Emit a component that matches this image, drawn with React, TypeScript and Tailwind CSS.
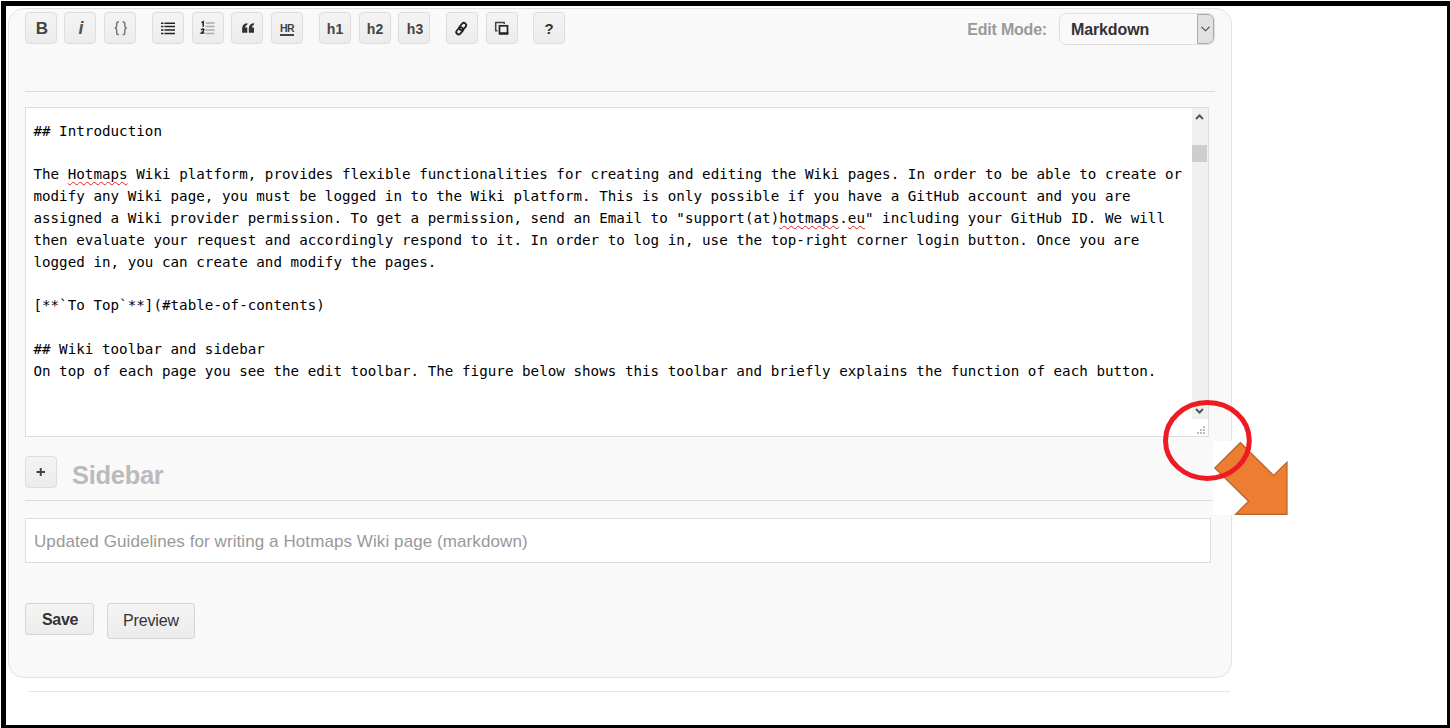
import React from "react";

const boxed =
  "flex h-8 w-8 shrink-0 items-center justify-center rounded border border-[#dddddd] bg-linear-to-b from-[#f4f4f4] to-[#ececec] text-[#333]";

function Glyph({ children }: { children: React.ReactNode }) {
  return (
    <svg width="30" height="30" viewBox="0 0 30 30" fill="none">
      {children}
    </svg>
  );
}

const tools: { id: string; gap: string; icon: React.ReactNode }[] = [
  { id: "bold", gap: "", icon: <span className="pl-0.5 text-[17px] leading-none font-bold text-[#444]">B</span> },
  { id: "italic", gap: "ml-[7px]", icon: <span className="pl-0.5 text-[18px] leading-none font-bold italic text-[#555]">i</span> },
  {
    id: "code",
    gap: "ml-2",
    icon: (
      <Glyph>
        <path
          d="M14 9h-1q-1.300 0-1.300 1.300v2.700q0 1.800-1.900 2.100q1.900.3 1.900 2.100v3q0 1.300 1.300 1.300h1M17.500 9h1q1.300 0 1.300 1.300v2.700q0 1.800 1.900 2.100q-1.900.3-1.900 2.100v3q0 1.300-1.300 1.300h-1"
          stroke="#777"
          strokeWidth="1.500"
        />
      </Glyph>
    ),
  },
  {
    id: "ul",
    gap: "ml-4",
    icon: (
      <Glyph>
        <path d="M8 10.200h2.500M8 13.500h2.500M8 17h2.500M8 20.500h2.500M11.500 10.200h10.500M11.500 13.500h10.500M11.500 17h10.500M11.500 20.500h10.500" stroke="#222" strokeWidth="1.600" />
      </Glyph>
    ),
  },
  {
    id: "ol",
    gap: "ml-2",
    icon: (
      <Glyph>
        <path d="M12.500 10h9M12.500 13.500h9M12.500 17h9M12.500 20.500h9" stroke="#aaa" strokeWidth="1.400" />
        <path d="M8.500 9.700l1.700-1v5M8 16.800q2.500-1.500 2.900 0q0 1-2.500 3.200h3" stroke="#222" strokeWidth="1.500" />
      </Glyph>
    ),
  },
  {
    id: "quote",
    gap: "ml-[7px]",
    icon: (
      <Glyph>
        <path
          d="M15.300 10v1.700q-1.900.5-2.100 2.800h2.100v5.200h-5.200v-4.200q0-4.700 5.200-5.500zM22 10v1.700q-1.900.5-2.100 2.800h2.100v5.200h-5.200v-4.200q0-4.700 5.200-5.500z"
          fill="#333"
        />
      </Glyph>
    ),
  },
  {
    id: "hr",
    gap: "ml-2",
    icon: <span className="mt-px border-b-[2px] border-[#444] text-[10.500px] leading-[12px] font-bold tracking-[-0.500px] text-[#444]">HR</span>,
  },
  { id: "h1", gap: "ml-4", icon: <span className="mt-0.5 text-[14px] leading-none font-bold text-[#444]">h1</span> },
  { id: "h2", gap: "ml-2", icon: <span className="mt-0.5 text-[14px] leading-none font-bold text-[#444]">h2</span> },
  { id: "h3", gap: "ml-[7px]", icon: <span className="mt-0.5 pl-0.5 text-[14px] leading-none font-bold text-[#444]">h3</span> },
  {
    id: "link",
    gap: "ml-4",
    icon: (
      <Glyph>
        <g transform="rotate(-48 14.500 15.500)" stroke="#222" strokeWidth="1.800">
          <rect x="7.600" y="13.400" width="8" height="4.600" rx="2.300" />
          <rect x="12.800" y="12.800" width="8" height="4.600" rx="2.300" />
        </g>
      </Glyph>
    ),
  },
  {
    id: "image",
    gap: "ml-2",
    icon: (
      <Glyph>
        <path d="M10.500 17.800h-1.800v-8.300h8.500v1.500" stroke="#444" strokeWidth="1.500" />
        <rect x="12.500" y="12.800" width="8" height="7.700" stroke="#222" strokeWidth="1.700" />
        <path d="M12 20.500h9.300" stroke="#222" strokeWidth="2.300" />
      </Glyph>
    ),
  },
  { id: "help", gap: "ml-[15px]", icon: <span className="mt-px text-[15px] leading-none font-bold">?</span> },
];

function Misspelt({ children }: { children: string }) {
  return (
    <span className="underline decoration-[#e02020] decoration-wavy decoration-[0.700px] underline-offset-[2px] [text-decoration-skip-ink:none]">
      {children}
    </span>
  );
}

export default function App() {
  return (
    <div className="h-[728px] w-[1450px] overflow-hidden bg-white pt-px pl-px font-['Liberation_Sans',Arial,sans-serif]">
      <div className="relative h-[727px] w-[1449px] border-t-[5px] border-r-[3px] border-b-[3px] border-l-[5px] border-black pt-0.5 pl-0.5">
        <div className="h-[670px] w-[1224px] rounded-[16px] border border-[#e2e2e2] bg-[#f9f9f9] pt-[3px] pl-4">
          <div className="flex h-[80px] w-[1190px] items-start justify-between border-b border-[#dddddd]">
            <div className="flex">
              {tools.map((t) => (
                <button key={t.id} className={`${boxed} ${t.gap}`}>
                  {t.icon}
                </button>
              ))}
            </div>
            <div className="flex items-center pt-px">
              <span className="mr-3 pt-px text-[16px] font-bold tracking-[-0.200px] text-[#999]">Edit Mode:</span>
              <div className="flex h-8 w-[156px] items-center justify-between overflow-hidden rounded-[7px] border border-[#dddddd] pl-[11px] text-[16px] font-bold tracking-[-0.120px] text-[#333]">
                <span className="pt-px">Markdown</span>
                <span className="flex h-[30px] w-[17px] items-center justify-center rounded-r-[6px] border border-[#aaa] bg-[#e1e1e1]">
                  <svg width="9" height="6" viewBox="0 0 9 6" fill="none">
                    <path d="M0.500 0.800l4 4l4-4" stroke="#444" strokeWidth="1.100" />
                  </svg>
                </span>
              </div>
            </div>
          </div>

          <div className="mt-[15px] flex h-[330px] w-[1184px] justify-between border border-[#dddddd] bg-white">
            <div className="pt-[12.700px] pl-[7.400px] font-['DejaVu_Sans_Mono',monospace] text-[14.200px] leading-[21.820px] tracking-[0.031px] whitespace-pre text-black">
              <div>## Introduction</div>
              <div> </div>
              <div>
                The <Misspelt>Hotmaps</Misspelt> Wiki platform, provides flexible functionalities for creating and editing the Wiki pages. In order to be able to create or
              </div>
              <div>modify any Wiki page, you must be logged in to the Wiki platform. This is only possible if you have a GitHub account and you are</div>
              <div>
                assigned a Wiki provider permission. To get a permission, send an Email to "support(at)<Misspelt>hotmaps</Misspelt>.<Misspelt>eu</Misspelt>" including your GitHub ID. We will
              </div>
              <div>then evaluate your request and accordingly respond to it. In order to log in, use the top-right corner login button. Once you are</div>
              <div>logged in, you can create and modify the pages.</div>
              <div> </div>
              <div>[**`To Top`**](#table-of-contents)</div>
              <div> </div>
              <div>## Wiki toolbar and sidebar</div>
              <div>On top of each page you see the edit toolbar. The figure below shows this toolbar and briefly explains the function of each button.</div>
            </div>
            <div className="flex w-4 shrink-0 flex-col">
              <div className="flex h-[311px] flex-col items-center bg-[#f0f0f0]">
                <svg className="mt-[5px] mr-px" width="9" height="8" viewBox="0 0 9 8" fill="none">
                  <path d="M1 6l3.500-3.500l3.500 3.500" stroke="#555" strokeWidth="2" />
                </svg>
                <div className="mt-6 mr-px h-[17px] w-[15px] bg-[#cdcdcd]" />
                <svg className="mt-auto mr-px mb-1" width="9" height="8" viewBox="0 0 9 8" fill="none">
                  <path d="M1 2l3.500 3.500l3.500-3.500" stroke="#555" strokeWidth="2" />
                </svg>
              </div>
              <svg width="16" height="17" viewBox="0 0 16 17" fill="#bbb">
                <path d="M11 7h2v2h-2zM8 10h2v2h-2zM11 10h2v2h-2zM5 13h2v2h-2zM8 13h2v2h-2zM11 13h2v2h-2z" />
              </svg>
            </div>
          </div>

          <div className="mt-[19px] flex h-[45px] w-[1190px] border-b border-[#dddddd]">
            <button className={boxed}>
              <Glyph>
                <path d="M10.500 15h8.500M14.750 11v8" stroke="#444" strokeWidth="2" />
              </Glyph>
            </button>
            <h2 className="ml-[15px] pt-[3px] text-[25.500px] leading-8 font-bold tracking-[-0.300px] text-[#bbb]">Sidebar</h2>
          </div>

          <div className="mt-[17px] flex h-[45px] w-[1186px] items-center border border-[#dddddd] bg-white pt-0.5 pl-2 text-[17px] tracking-[0.085px] text-[#999]">
            Updated Guidelines for writing a Hotmaps Wiki page (markdown)
          </div>

          <div className="mt-10 flex items-start">
            <button className="h-8 w-[69px] rounded-[3px] border border-[#d4d4d4] bg-linear-to-b from-[#f4f4f4] to-[#ececec] pl-px text-[16px] leading-[31px] font-bold tracking-[-0.300px] text-[#333]">
              Save
            </button>
            <button className="ml-[13px] h-9 w-[88px] rounded-[3px] border border-[#d4d4d4] bg-linear-to-b from-[#f4f4f4] to-[#ececec] pb-px text-[16px] leading-[32px] tracking-[-0.150px] text-[#333]">
              Preview
            </button>
          </div>
        </div>
        <div className="mt-[13px] ml-5 h-px w-[1202px] bg-[#e5e5e5]" />

        <svg className="absolute top-[390px] left-[1154px]" width="136" height="126" viewBox="1160 396 136 126" fill="none">
          <path d="M1213 441h22v74h-22z" fill="#fff" />
          <path
            d="M1240.300 442.500L1273.700 475.500L1287 462.300V514.300H1235.500L1248.600 501.300L1214.800 468z"
            fill="#ed7d31"
            stroke="#b5622b"
            strokeWidth="1.200"
          />
          <ellipse cx="1207.400" cy="440.400" rx="41.900" ry="38" stroke="#ed1c24" strokeWidth="5" />
        </svg>
      </div>
    </div>
  );
}
